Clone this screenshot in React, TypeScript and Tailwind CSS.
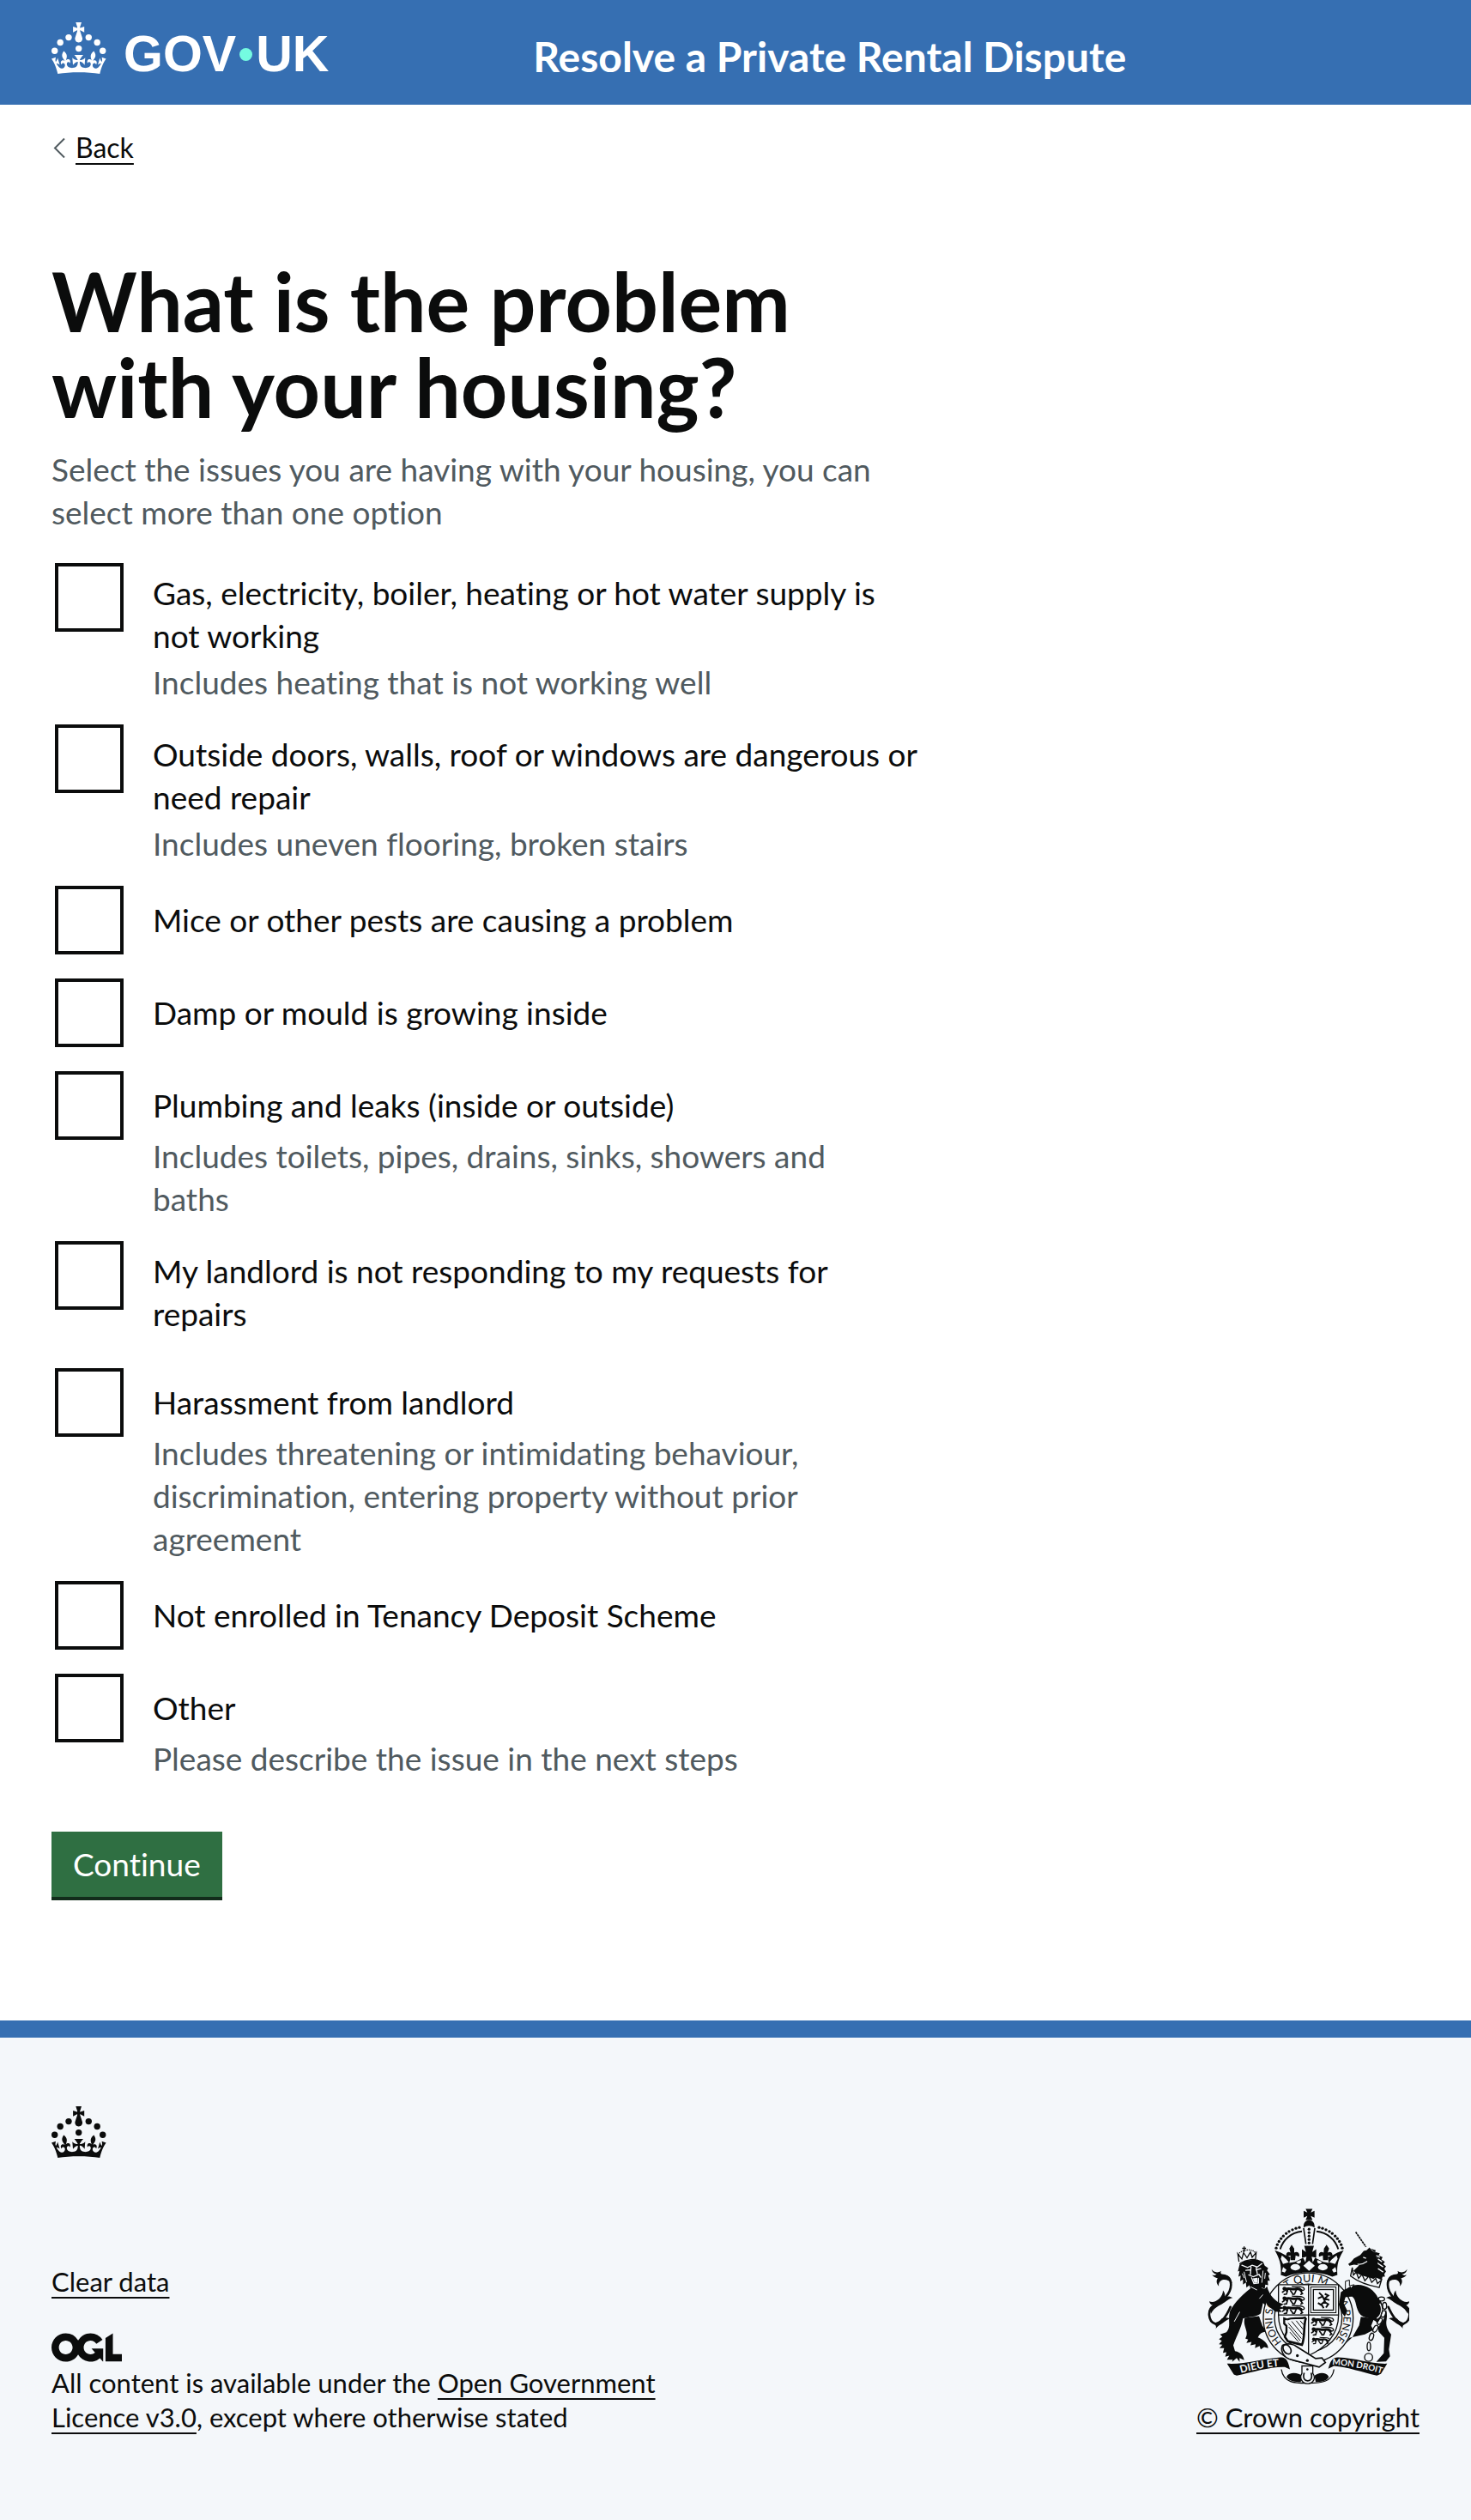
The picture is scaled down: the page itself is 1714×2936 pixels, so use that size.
import React from "react";

type Option = { id: string; label: string; hint?: string };

const options: Option[] = [
  {
    id: "utilities",
    label: "Gas, electricity, boiler, heating or hot water supply is not working",
    hint: "Includes heating that is not working well",
  },
  {
    id: "structure",
    label: "Outside doors, walls, roof or windows are dangerous or need repair",
    hint: "Includes uneven flooring, broken stairs",
  },
  { id: "pests", label: "Mice or other pests are causing a problem" },
  { id: "damp", label: "Damp or mould is growing inside" },
  {
    id: "plumbing",
    label: "Plumbing and leaks (inside or outside)",
    hint: "Includes toilets, pipes, drains, sinks, showers and baths",
  },
  { id: "repairs", label: "My landlord is not responding to my requests for repairs" },
  {
    id: "harassment",
    label: "Harassment from landlord",
    hint: "Includes threatening or intimidating behaviour, discrimination, entering property without prior agreement",
  },
  { id: "deposit", label: "Not enrolled in Tenancy Deposit Scheme" },
  { id: "other", label: "Other", hint: "Please describe the issue in the next steps" },
];

function Crown() {
  return (
    <svg viewBox="0 0 64 60" className="h-[60px] w-16 shrink-0" fill="currentColor" aria-hidden="true">
      <circle cx="20" cy="17.6" r="3.7" />
      <circle cx="10.2" cy="23.5" r="3.7" />
      <circle cx="3.7" cy="33.2" r="3.7" />
      <circle cx="31.7" cy="30.6" r="3.7" />
      <circle cx="43.3" cy="17.6" r="3.7" />
      <circle cx="53.2" cy="23.5" r="3.7" />
      <circle cx="59.7" cy="33.2" r="3.7" />
      <path d="M33.1,9.8c.2-.1.3-.3.5-.5l4.6,2.4v-6.8l-4.6,1.5c-.1-.2-.3-.3-.5-.5l1.9-5.9h-6.7l1.9,5.9c-.2.1-.3.3-.5.5l-4.6-1.5v6.8l4.6-2.4c.1.2.3.3.5.5l-2.6,8c-.9,2.8,1.2,5.7,4.1,5.7h0c3,0,5.1-2.9,4.1-5.7l-2.6-8ZM37,37.9s-3.4,3.8-4.1,6.1c2.2,0,4.2-.5,6.4-2.8l-.7,8.5c-2-2.8-4.4-4.1-5.7-3.8.1,3.1.5,6.7,5.8,7.2,3.7.3,6.7-1.5,7-3.8.4-2.6-2-4.3-3.7-1.6-1.4-4.5,2.4-6.1,4.9-3.2-1.9-4.5-1.8-7.7,2.4-10.9,3,4,2.6,7.3-1.2,11.1,2.4-1.3,6.2,0,4,4.6-1.2-2.8-3.7-2.2-4.2.2-.3,1.7.7,3.7,3,4.2,1.9.3,4.7-.9,7-5.9-1.3,0-2.4.7-3.9,1.7l2.4-8c.6,2.3,1.4,3.7,2.2,4.5.6-1.6.5-2.8,0-5.3l5,1.8c-2.6,3.6-5.2,8.7-7.3,17.5-7.4-1.1-15.7-1.7-24.5-1.7h0c-8.8,0-17.1.6-24.5,1.7-2.1-8.9-4.7-13.9-7.3-17.5l5-1.8c-.5,2.5-.6,3.7,0,5.3.8-.8,1.6-2.3,2.2-4.5l2.4,8c-1.5-1-2.6-1.7-3.9-1.7,2.3,5,5.2,6.2,7,5.9,2.3-.4,3.3-2.4,3-4.2-.5-2.4-3-3.1-4.2-.2-2.2-4.6,1.6-6,4-4.6-3.7-3.7-4.2-7.1-1.2-11.1,4.2,3.2,4.3,6.4,2.4,10.9,2.5-2.8,6.3-1.3,4.9,3.2-1.8-2.7-4.1-1-3.7,1.6.3,2.3,3.3,4.1,7,3.8,5.4-.5,5.7-4.2,5.8-7.2-1.3-.2-3.7,1-5.7,3.8l-.7-8.5c2.2,2.3,4.2,2.7,6.4,2.8-.7-2.3-4.1-6.1-4.1-6.1h10.6,0Z" />
    </svg>
  );
}

/* Walking lion, repeated in threes on the English quarters */
function Passant({ x, y }: { x: number; y: number }) {
  return (
    <g transform={`translate(${x} ${y})`} fill="none" stroke="#0b0c0c" strokeLinecap="round">
      <path d="M12 10C24 4 34 12 48 9C58 7 64 10 68 14" strokeWidth="9" />
      <path d="M8 8L16 16M8 16L2 20M20 14L16 27L8 28M30 15L38 26M50 13L44 27L38 28M64 14L72 25L66 28" strokeWidth="5" />
      <path d="M66 12C78 18 82 8 74 4C66 0 50 2 36 0" strokeWidth="4" />
      <circle cx="9" cy="8" r="7" fill="#0b0c0c" stroke="none" />
    </g>
  );
}

/* S-shaped tail with tufts; mirrored for the unicorn */
function Tail() {
  return (
    <g>
      <path
        d="M190 412C176 446 152 476 136 470C112 462 108 420 132 408C160 394 192 368 192 334C192 306 170 298 150 302"
        fill="none"
        stroke="#0b0c0c"
        strokeWidth="8"
        strokeLinecap="round"
      />
      <path d="M124 280C132 292 146 294 158 286C154 292 156 298 164 300C180 298 194 312 196 330C186 318 172 314 160 318C150 324 148 332 150 340C140 330 140 318 146 312C138 310 130 306 126 300C132 302 138 302 142 298C132 296 126 290 124 280Z" />
      <path d="M116 392C128 398 140 392 150 384C160 374 164 364 164 354C172 364 172 372 170 378C178 374 188 374 198 380C184 382 176 392 160 402C144 410 130 418 122 436C118 426 120 414 128 406C122 404 118 400 116 392Z" />
      <path d="M138 490C142 482 140 476 130 468C142 466 152 462 160 452C170 448 180 448 188 452C174 458 164 468 154 474C148 478 142 482 138 490Z" />
    </g>
  );
}

function RoyalArms() {
  const ink = "#0b0c0c";
  const paper = "#f4f7fa";
  const archDots = [
    [350, 206], [354, 194], [360, 183], [367, 173], [375, 164], [385, 155], [395, 148], [407, 142], [419, 137], [431, 134],
  ];
  return (
    <svg viewBox="110 65 705 620" className="h-[207px] w-[235px]" aria-hidden="true" fill={ink}>
      <defs>
        <path id="garter-left" d="M370 534A124 124 0 0 1 400 341" />
        <path id="garter-top" d="M388 350A124 124 0 0 1 546 356" />
        <path id="garter-right" d="M571 393A124 124 0 0 1 500 568" />
        <path id="motto-left" d="M226 643Q300 622 376 618" />
        <path id="motto-right" d="M546 614Q630 618 720 645" />
      </defs>

      <Tail />
      <g transform="translate(932 0) scale(-1 1)">
        <Tail />
      </g>

      {/* lion */}
      <path d="M270 340C238 362 204 396 188 428C180 462 194 480 176 500L154 508L162 516L150 524L160 530L150 542L162 544L152 556L168 556L164 572L176 570L172 586L186 582L178 596L198 596L196 604L212 590L222 604L222 590L238 598C236 582 226 570 206 566L200 546C212 510 228 486 234 452C254 446 286 446 296 434L304 398C318 410 330 428 344 430L356 426L352 436L374 430L362 418L378 412L360 404L368 396C344 394 328 382 318 350Z" />
      <path d="M240 450C232 480 258 500 242 522L252 526L246 538L264 534L260 546L278 542L276 556L292 548L296 560L308 552L322 556C322 540 306 526 286 518C294 502 308 496 318 500L302 478L290 444Z" />
      <path d="M222 264L216 288L222 286L218 306L226 302L224 322L234 316L234 334L244 326L246 344L256 336L262 352L274 348L296 356L300 344L310 348L312 334L322 336L320 320L328 320L322 302L328 298L318 284L322 276L310 268L304 254L284 246L240 250Z" />
      <g stroke={paper} strokeWidth="4" fill="none" strokeLinecap="round">
        <path d="M230 266L250 274L266 266L284 272L300 260M244 284L260 282M280 282L296 278M262 272L260 298M280 274L284 296M254 300L270 306L290 298L296 308M264 310L272 330L288 328L288 312" />
        <path d="M238 290L246 324M304 286L300 326M232 296L238 310M312 294L310 312M262 342L282 352M308 364L292 382M222 430L204 462" strokeWidth="3" />
      </g>
      <path d="M268 312L284 310L286 326L274 328Z" fill={paper} />
      <g fill="none" stroke={ink} strokeWidth="4">
        <path d="M222 262C232 252 262 244 280 246M220 254L216 226L230 244L236 222L248 240L260 220L266 238L280 222L278 244" />
        <path d="M218 230C220 212 274 204 278 226" strokeDasharray="4 3" />
        <path d="M238 200V220M231 207H245" />
      </g>

      {/* unicorn */}
      <path d="M628 150L664 202" stroke={ink} strokeWidth="5" strokeDasharray="8 2" />
      <path d="M602 262L612 254L622 242L644 230L656 216L666 214L676 204L684 214L696 222C706 240 708 268 704 304L690 314C668 306 632 300 620 286L634 272L640 266L622 264L606 268Z" />
      <path d="M680 208L698 214L696 220L712 224L708 232L722 238L718 246L730 254L724 262L734 270L728 278L734 288L728 296L730 306L722 306L718 318L706 312L694 308L704 296L696 288L706 278L698 270L708 258L698 250L704 240L692 232L696 222Z" />
      <path d="M654 238L664 242M634 262C650 266 662 256 668 252M700 232L712 238M706 244L720 254M706 260L724 272M706 278L724 290" stroke={paper} strokeWidth="4" fill="none" />
      <path d="M604 342C646 322 690 346 706 380C726 396 742 424 736 456C732 474 738 492 752 508L744 560L748 584L734 602L700 604L726 574L728 520L708 498L704 470C698 456 676 452 656 446L646 440C626 420 632 388 616 376L592 376L582 402L596 428L580 426L570 404L574 362L590 350Z" />
      <path d="M646 446L640 476L616 518L592 540L606 520L660 508L690 492L682 478L692 452Z" />
      <path d="M616 274L610 304C636 324 676 338 710 344L718 318L704 330L698 312L684 326L674 304L660 320L650 298L638 312L630 290L620 300Z" fill={paper} stroke={ink} strokeWidth="4" />
      <path d="M592 322L606 318L606 338L622 334L608 352L592 356Z" fill={paper} stroke={ink} strokeWidth="3" />
      <path d="M712 400C724 420 716 444 702 452" stroke={paper} strokeWidth="4" fill="none" />
      <g fill="none" stroke={paper} strokeWidth="11">
        <path d="M712 380C740 400 728 450 706 474C690 492 680 530 674 570" />
      </g>
      <g fill="none" stroke={ink} strokeWidth="4">
        <ellipse cx="718" cy="384" rx="11" ry="7" />
        <ellipse cx="729" cy="408" rx="7" ry="12" />
        <ellipse cx="725" cy="436" rx="7" ry="12" transform="rotate(20 725 436)" />
        <ellipse cx="712" cy="462" rx="7" ry="12" transform="rotate(30 712 462)" />
        <ellipse cx="697" cy="488" rx="7" ry="13" transform="rotate(28 697 488)" />
        <ellipse cx="683" cy="516" rx="7" ry="13" transform="rotate(18 683 516)" />
        <ellipse cx="674" cy="550" rx="6" ry="15" />
        <circle cx="673" cy="588" r="14" />
      </g>

      {/* garter */}
      <circle cx="462" cy="450" r="157" fill={paper} stroke={ink} strokeWidth="4" />
      <circle cx="462" cy="450" r="118" fill="none" stroke={ink} strokeWidth="4" />
      <g fontFamily="Lato, sans-serif" fontSize="36" fill={ink}>
        <text><textPath href="#garter-left">HONI SO</textPath></text>
        <text fontSize="38"><textPath href="#garter-top">T QUI M</textPath></text>
        <text><textPath href="#garter-right">A PENSE</textPath></text>
      </g>

      {/* shield */}
      <path d="M358 334H568V440C568 510 520 556 463 582C406 556 358 510 358 440Z" fill={paper} stroke={ink} strokeWidth="4" />
      <path d="M463 334V582M358 440H568" stroke={ink} strokeWidth="4" />
      <Passant x={370} y={340} />
      <Passant x={370} y={374} />
      <Passant x={370} y={407} />
      <Passant x={472} y={448} />
      <Passant x={472} y={482} />
      <g transform="translate(474 518) scale(.8)">
        <Passant x={0} y={0} />
      </g>
      <g fill="none" stroke={ink}>
        <rect x="471" y="342" width="88" height="90" strokeWidth="3" />
        <rect x="480" y="351" width="70" height="72" strokeWidth="4" />
        <path d="M500 362L512 374L520 392L506 404L496 398M520 366L532 372L520 382L536 388M518 394L532 402L524 414M510 376L496 382M508 402L516 416" strokeWidth="6" />
        <path d="M388 456L378 452V470L386 478V500L380 516L392 534M388 456C410 446 430 456 454 448" strokeWidth="7" />
        <path d="M392 468L438 522M394 482L434 530M398 500L428 534M404 462L442 508M420 460L444 490M434 460L446 474" strokeWidth="3" />
        <path d="M454 450C444 478 452 520 440 544L392 532" strokeWidth="8" />
      </g>
      {/* forepaws over the shield edge */}
      <path d="M318 340C326 372 350 398 376 402L364 410L380 416L362 420L370 430L346 428L318 404L300 360Z" />
      <path d="M610 340L576 360L570 400L578 430L590 446L598 424L586 400L592 378L622 372Z" />

      {/* buckle and strap */}
      <path d="M372 546C388 538 410 540 424 552L488 592L510 590L522 606L500 622L470 614L396 594C374 586 364 562 372 546Z" fill={paper} stroke={ink} strokeWidth="5" />
      <ellipse cx="388" cy="560" rx="12" ry="18" transform="rotate(-35 388 560)" fill="none" stroke={ink} strokeWidth="5" />
      <circle cx="424" cy="582" r="5" />
      <circle cx="459" cy="599" r="5" />

      {/* ribbon */}
      <path d="M178 610C240 614 300 592 366 588C384 586 392 600 398 630L380 622C330 620 270 640 212 652L202 648Z" />
      <path d="M738 610C680 612 630 590 566 588C548 588 540 598 532 628L552 618C600 622 650 640 702 652L716 646Z" />
      <path d="M368 630C376 680 420 678 462 678C504 678 546 676 552 630" fill="none" stroke={ink} strokeWidth="4" />
      <path d="M386 656C396 636 430 642 440 652L436 674C416 674 396 672 386 656ZM534 656C524 636 494 642 484 652L488 674C506 674 526 672 534 656Z" />
      <path d="M440 618H478V644C490 660 480 680 460 680C440 680 430 660 440 644Z" fill={paper} stroke={ink} strokeWidth="4" />
      <path d="M448 642C442 662 450 670 460 670C470 670 478 662 472 642" fill="none" stroke={ink} strokeWidth="5" />
      <circle cx="459" cy="630" r="4" />
      <g fontFamily="Lato, sans-serif" fontWeight="700" fill={paper}>
        <text fontSize="36"><textPath href="#motto-left">DIEU ET</textPath></text>
        <text fontSize="30"><textPath href="#motto-right">MON DROIT</textPath></text>
      </g>

      {/* imperial crown */}
      <path d="M345 214L366 222L384 232L400 238L396 258L416 254L444 240L452 256L456 236L440 240V210L454 220L448 198H482L476 220L490 210V240L474 236L478 256L486 240L514 254L534 258L530 238L546 232L564 222L586 214C572 236 560 262 564 300L546 306C500 286 430 286 384 306L366 300C370 262 358 236 345 214Z" />
      <path d="M404 194L413 208V222C424 216 434 224 430 236L418 232L416 248H400L400 232L386 236C382 222 392 216 400 222L396 208ZM526 194L535 208L530 222C540 216 550 224 546 236L532 232L530 248H514L513 232L500 236C496 222 506 216 516 222L517 208Z" />
      <path d="M370 232L386 246L394 256L374 262L366 244ZM436 248C440 262 424 264 420 254L430 250ZM561 232L544 246L536 256L556 262L565 244ZM494 248C490 262 506 264 510 254L500 250Z" fill={paper} />
      <path d="M465 250L485 268L465 286L445 268Z" fill={paper} />
      <ellipse cx="417" cy="273" rx="17" ry="11" fill={paper} />
      <ellipse cx="513" cy="273" rx="17" ry="11" fill={paper} />
      <path d="M374 272L386 282L380 292L370 288ZM557 272L545 282L551 292L561 288Z" fill={paper} />
      {archDots.map(([x, y]) => (
        <React.Fragment key={x}>
          <circle cx={x} cy={y} r="5" />
          <circle cx={931 - x} cy={y} r="5" />
        </React.Fragment>
      ))}
      <path d="M364 210C374 176 402 152 440 148M567 210C557 176 529 152 491 148" fill="none" stroke={ink} strokeWidth="6" />
      <path d="M446 136L454 192M485 136L477 192" stroke={ink} strokeWidth="5" />
      {[140, 152, 164, 176, 188].map((y) => (
        <circle key={y} cx="465" cy={y} r="5" />
      ))}
      <path d="M446 134C444 116 456 108 465 108C474 108 486 116 484 134C472 126 458 126 446 134Z" />
      <path d="M453 69H477L471 82L484 76V100L471 94L477 108H453L459 94L446 100V76L459 82Z" />
    </svg>
  );
}

const link =
  "underline decoration-2 underline-offset-[6px] [text-decoration-skip-ink:none] hover:decoration-4";

export default function App() {
  return (
    <div className="flex min-h-screen flex-col bg-white font-['Lato',sans-serif] text-[#0b0c0c] [font-variant-ligatures:none]">
      <header className="bg-[#366fb2] text-white">
        <div className="grid h-[122px] grid-cols-3 items-start px-[60px]">
          <a href="#" aria-label="GOV.UK" className="flex items-start gap-5 pt-[26px]">
            <Crown />
            <span className="mt-[7px] flex items-center font-['Liberation_Sans',sans-serif] text-[59px] leading-[60px] font-bold">
              GOV
              <span className="mx-1 size-[15px] rounded-full bg-[#74fbe1]" />
              UK
            </span>
          </a>
          <a href="#" className="col-span-2 pt-[36px] pl-[30px] text-[48px] leading-[60px] font-bold">
            Resolve a Private Rental Dispute
          </a>
        </div>
      </header>

      <div className="grow px-[60px]">
        <a href="#" className="mt-[30px] inline-flex items-center gap-3 text-[32px] leading-[40px]">
          <svg viewBox="0 0 14 24" className="ml-[2px] h-6 w-[14px]" fill="none" stroke="#505a5f" strokeWidth="2" aria-hidden="true">
            <path d="M13 1.500L2 12.500L13 23.500" />
          </svg>
          <span className={link}>Back</span>
        </a>

        <main className="pt-[108px] pb-[140px]">
          <form className="w-2/3" onSubmit={(e) => e.preventDefault()}>
            <fieldset aria-describedby="problem-hint">
              <legend>
                <h1 className="max-w-[960px] text-[95px] leading-[100px] font-bold">
                  What is the problem with your housing?
                </h1>
              </legend>
              <p id="problem-hint" className="mt-[22px] max-w-[1000px] text-[37px] leading-[50px] text-[#505a5f]">
                Select the issues you are having with your housing, you can select more than one option
              </p>
              <div className="mt-[30px] flex flex-col gap-5 text-[37px] leading-[50px]">
                {options.map((o) => (
                  <div key={o.id} className="grid grid-cols-[88px_minmax(0,1fr)]">
                    <input
                      id={o.id}
                      type="checkbox"
                      aria-describedby={o.hint ? `${o.id}-hint` : undefined}
                      className="m-1 size-20 appearance-none border-4 border-[#0b0c0c] bg-white checked:bg-[#0b0c0c] checked:shadow-[inset_0_0_0_12px_white]"
                    />
                    <label htmlFor={o.id} className="max-w-[925px] self-center py-[14px] pl-[30px]">
                      {o.label}
                    </label>
                    {o.hint && (
                      <p id={`${o.id}-hint`} className="col-start-2 -mt-[10px] max-w-[880px] pl-[30px] text-[#505a5f]">
                        {o.hint}
                      </p>
                    )}
                  </div>
                ))}
              </div>
            </fieldset>
            <button
              type="submit"
              className="mt-[60px] block h-20 border-b-4 border-[#122c1b] bg-[#2f6f42] px-[25px] text-[37px] leading-[38px] text-white"
            >
              Continue
            </button>
          </form>
        </main>
      </div>

      <footer className="border-t-[20px] border-[#366fb2] bg-[#f4f7fa] px-[60px] pt-20 pb-[100px] text-[31px] leading-[40px]">
        <Crown />
        <div className="mt-[58px] flex items-end justify-between">
          <div className="max-w-[760px]">
            <a href="#" className={link}>
              Clear data
            </a>
            <svg viewBox="0 0 483.2 195.7" className="mt-10 mb-1 h-[34px] w-[82px]" fill="currentColor" aria-hidden="true">
              <path d="M421.500 142.800V.1l-50.700 32.300v161.100h112.400v-50.700zm-122.300-9.600A47.120 47.120 0 0 1 221 97.800c0-26 21.100-47.100 47.100-47.100 16.700 0 31.400 8.700 39.700 21.800l42.700-27.200A97.630 97.630 0 0 0 268.100 0c-36.500 0-68.300 20.100-85.100 49.700A98 98 0 0 0 97.800 0C43.900 0 0 43.900 0 97.800s43.900 97.800 97.800 97.800c36.500 0 68.300-20.100 85.100-49.700a97.760 97.760 0 0 0 149.600 25.400l19.400 22.200h3v-87.800h-80l24.300 27.500zM97.800 145c-26 0-47.100-21.100-47.100-47.100s21.100-47.100 47.100-47.100 47.100 21.100 47.100 47.100S123.800 145 97.800 145" />
            </svg>
            <p>
              All content is available under the{" "}
              <a href="#" className={link}>
                Open Government Licence v3.0
              </a>
              , except where otherwise stated
            </p>
          </div>
          <a href="#" className={`flex flex-col items-center gap-[17px] ${link}`}>
            <RoyalArms />
            <span>© Crown copyright</span>
          </a>
        </div>
      </footer>
    </div>
  );
}
